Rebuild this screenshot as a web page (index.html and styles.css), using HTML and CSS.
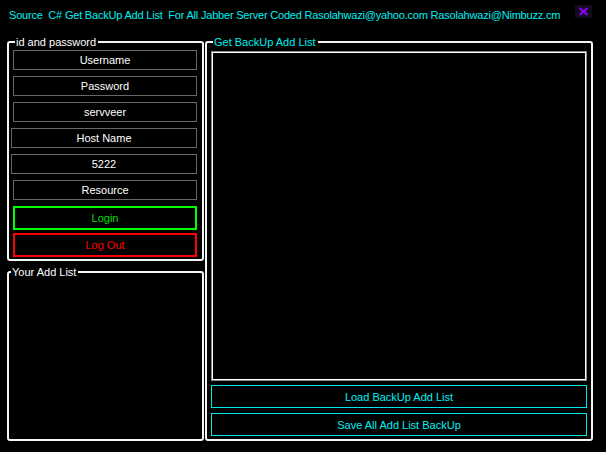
FILE: index.html
```html
<!DOCTYPE html>
<html>
<head>
<meta charset="utf-8">
<link rel="stylesheet" href="styles.css">
</head>
<body>
<div class="window">
  <header class="titlebar">
    <span class="title">Source&nbsp; C# Get BackUp Add List&nbsp; For All Jabber Server Coded Rasolahwazi@yahoo.com Rasolahwazi@Nimbuzz.cm</span>
    <span class="close"><svg width="11" height="9" viewBox="0 0 11 9"><path d="M1.5 1 L9.5 8 M9.5 1 L1.5 8" stroke="#8c00ff" stroke-width="2" fill="none"/></svg></span>
  </header>
  <main class="main">
    <div class="left">
      <fieldset class="group login-group">
        <legend class="legend">id and password</legend>
        <div class="field">Username</div>
        <div class="field">Password</div>
        <div class="field">servveer</div>
        <div class="field wide">Host Name</div>
        <div class="field wide">5222</div>
        <div class="field">Resource</div>
        <div class="btn btn-login">Login</div>
        <div class="btn btn-logout">Log Out</div>
      </fieldset>
      <fieldset class="group list-group">
        <legend class="legend">Your Add List</legend>
      </fieldset>
    </div>
    <fieldset class="group right-group">
      <legend class="legend cyan">Get BackUp Add List</legend>
      <div class="panel"></div>
      <div class="btn btn-cyan">Load BackUp Add List</div>
      <div class="btn btn-cyan">Save All Add List BackUp</div>
    </fieldset>
  </main>
</div>
</body>
</html>
```
FILE: styles.css
```css
html, body {
  margin: 0;
  padding: 0;
  background: #000;
}
body {
  width: 606px;
  height: 452px;
  overflow: hidden;
  font-family: "Liberation Sans", "DejaVu Sans", sans-serif;
  font-size: 11px;
  color: #fff;
}
.window {
  display: flex;
  flex-direction: column;
  height: 452px;
}
.titlebar {
  height: 35px;
  display: flex;
  align-items: flex-start;
  justify-content: space-between;
  padding: 0 14px 0 9px;
  box-sizing: border-box;
}
.title {
  color: #00f0f0;
  font-size: 11px;
  line-height: 14px;
  margin-top: 8px;
  letter-spacing: -0.2px;
  white-space: nowrap;
  overflow: hidden;
  min-width: 0;
}
.close {
  flex: none;
  margin-top: 5px;
  width: 17px;
  height: 13px;
  background: #140a1e;
  display: flex;
  align-items: center;
  justify-content: center;
}
.main {
  flex: 1;
  display: flex;
  gap: 1px;
  padding: 0 13px 11px 7px;
}
.left {
  width: 197px;
  display: flex;
  flex-direction: column;
  gap: 4px;
}
.group {
  margin: 0;
  min-width: 0;
  border: 2px solid #f4f4f4;
  border-radius: 3px;
  box-sizing: border-box;
}
.legend {
  padding: 0 2px 0 1px;
  margin-left: 2px;
  line-height: 14px;
  font-size: 11px;
  color: #fff;
}
.legend.cyan {
  color: #00f0f0;
}
.login-group {
  height: 226px;
  padding: 1px 5px 3px 4px;
  display: flex;
  flex-direction: column;
  gap: 6px;
}
.list-group {
  flex: 1;
  padding: 0;
}
.field {
  height: 20px;
  box-sizing: border-box;
  border: 1px solid #666;
  display: flex;
  align-items: center;
  justify-content: center;
  color: #fff;
}
.field.wide {
  margin-left: -2px;
}
.btn {
  height: 24px;
  box-sizing: border-box;
  border: 2px solid;
  display: flex;
  align-items: center;
  justify-content: center;
}
.btn-login {
  border-color: #00ff00;
  color: #00dd00;
}
.btn-logout {
  border-color: #ff0000;
  color: #ff0000;
  margin-top: -3px;
}
.right-group {
  flex: 1;
  padding: 3px 4px 2px 4px;
  display: flex;
  flex-direction: column;
  gap: 5px;
}
.panel {
  height: 328px;
  box-sizing: border-box;
  margin: 0 1px;
  border: 1px solid #fff;
  box-shadow: 0 0 0 1px #8a8a8a;
}
.btn-cyan {
  height: 23px;
  border: 1px solid #00e8e8;
  color: #00f0f0;
}
```
